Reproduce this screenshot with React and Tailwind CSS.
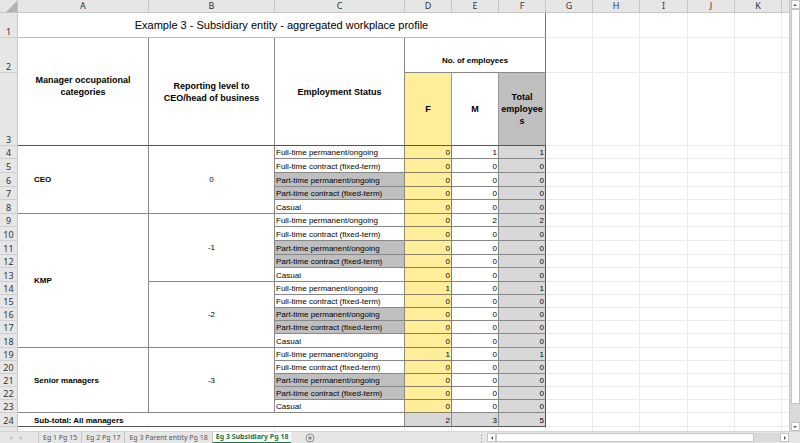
import { useState } from "react";

const columns = ["A", "B", "C", "D", "E", "F", "G", "H", "I", "J", "K", ""];

const full = "Full-time permanent/ongoing";
const fullFixed = "Full-time contract (fixed-term)";
const part = "Part-time permanent/ongoing";
const partFixed = "Part-time contract (fixed-term)";

const rows = [
  { n: 4, h: "h-[13px]", category: "CEO", catSpan: 5, level: "0", status: full, f: 0, m: 1, total: 1 },
  { n: 5, h: "h-[14px]", status: fullFixed, f: 0, m: 0, total: 0 },
  { n: 6, h: "h-[14px]", status: part, shaded: true, f: 0, m: 0, total: 0 },
  { n: 7, h: "h-[13px]", status: partFixed, shaded: true, f: 0, m: 0, total: 0 },
  { n: 8, h: "h-[14px]", status: "Casual", f: 0, m: 0, total: 0 },
  { n: 9, h: "h-[13px]", category: "KMP", catSpan: 10, level: "-1", status: full, f: 0, m: 2, total: 2 },
  { n: 10, h: "h-[14px]", status: fullFixed, f: 0, m: 0, total: 0 },
  { n: 11, h: "h-[14px]", status: part, shaded: true, f: 0, m: 0, total: 0 },
  { n: 12, h: "h-[13px]", status: partFixed, shaded: true, f: 0, m: 0, total: 0 },
  { n: 13, h: "h-[14px]", status: "Casual", f: 0, m: 0, total: 0 },
  { n: 14, h: "h-[13px]", level: "-2", status: full, f: 1, m: 0, total: 1 },
  { n: 15, h: "h-[13px]", status: fullFixed, f: 0, m: 0, total: 0 },
  { n: 16, h: "h-[13px]", status: part, shaded: true, f: 0, m: 0, total: 0 },
  { n: 17, h: "h-[13px]", status: partFixed, shaded: true, f: 0, m: 0, total: 0 },
  { n: 18, h: "h-[14px]", status: "Casual", f: 0, m: 0, total: 0 },
  { n: 19, h: "h-[13px]", category: "Senior managers", catSpan: 5, level: "-3", status: full, f: 1, m: 0, total: 1 },
  { n: 20, h: "h-[13px]", status: fullFixed, f: 0, m: 0, total: 0 },
  { n: 21, h: "h-[13px]", status: part, shaded: true, f: 0, m: 0, total: 0 },
  { n: 22, h: "h-[13px]", status: partFixed, shaded: true, f: 0, m: 0, total: 0 },
  { n: 23, h: "h-[13px]", status: "Casual", f: 0, m: 0, total: 0 },
];

const tabs = ["Eg 1 Pg 15", "Eg 2 Pg 17", "Eg 3 Parent entity Pg 18", "Eg 3 Subsidiary Pg 18"];

function RowHead({ n }) {
  return (
    <th
      scope="row"
      className="border-r border-b border-r-[#c6c6c6] border-b-[#cfcfcf] bg-[#e6e6e6] text-center align-bottom font-['Noto_Sans'] text-[9px] leading-[11px] font-normal text-[#333]"
    >
      {n}
    </th>
  );
}

// unused cells to the right of the data
function EmptyCells({ count = 6 }) {
  return Array.from({ length: count }, (_, i) => (
    <td key={i} className="border-r border-b border-[#ebebeb] last:border-r-0" />
  ));
}

function Arrow({ dir }) {
  const points = {
    up: "1,4 5,4 3,2",
    down: "1,2 5,2 3,4",
    left: "4,1 4,5 2,3",
    right: "2,1 2,5 4,3",
  };
  return (
    <svg viewBox="0 0 6 6" className="h-1.5 w-1.5" fill="currentColor">
      <polygon points={points[dir]} />
    </svg>
  );
}

function ScrollButton({ dir, label }) {
  return (
    <button
      aria-label={label}
      className="flex h-[9px] w-[9px] shrink-0 items-center justify-center border border-[#c4c4c4] bg-white text-[#555]"
    >
      <Arrow dir={dir} />
    </button>
  );
}

function Sheet() {
  return (
    <table className="w-full table-fixed border-separate border-spacing-0 text-[8px] leading-[11px] text-black">
      <colgroup>
        <col className="w-[18px]" />
        <col className="w-[131px]" />
        <col className="w-[126px]" />
        <col className="w-[130px]" />
        <col className="w-[47px]" />
        <col className="w-[47px]" />
        <col className="w-[47px]" />
        <col className="w-[47px]" />
        <col className="w-[47px]" />
        <col className="w-[48px]" />
        <col className="w-[47px]" />
        <col className="w-[47px]" />
        <col />
      </colgroup>
      <thead>
        <tr className="h-[13px] bg-[#e6e6e6]">
          <th className="border-r border-b border-[#c6c6c6]">
            <svg viewBox="0 0 11 11" className="ml-auto h-[11px] w-[11px]" fill="#b2b2b2">
              <polygon points="11,0 11,11 0,11" />
            </svg>
          </th>
          {columns.map((c, i) => (
            <th
              key={i}
              scope="col"
              className="border-r border-b border-[#c6c6c6] font-['Noto_Sans'] text-[9px] leading-3 font-normal text-[#333] last:border-r-0"
            >
              {c}
            </th>
          ))}
        </tr>
      </thead>
      <tbody className="[&_td]:p-0 [&_th]:p-0">
        <tr className="h-[25px]">
          <RowHead n={1} />
          <td
            colSpan={6}
            className="border-r border-b border-r-[#777] border-b-[#bbb] text-center text-[11px] leading-3"
          >
            Example 3 - Subsidiary entity - aggregated workplace profile
          </td>
          <EmptyCells />
        </tr>
        <tr className="h-[35px] text-[9px] leading-3">
          <RowHead n={2} />
          <th rowSpan={2} className="border-r border-b border-r-[#888] border-b-[#555]">
            <div className="px-3 pb-3">Manager occupational categories</div>
          </th>
          <th rowSpan={2} className="border-r border-b border-r-[#888] border-b-[#555]">
            <div className="px-3">Reporting level to CEO/head of business</div>
          </th>
          <th rowSpan={2} className="border-r border-b border-r-[#888] border-b-[#555]">
            Employment Status
          </th>
          <th colSpan={3} className="border-r border-b border-r-[#777] border-b-[#888] text-[8px]">
            <div className="pt-3">No. of employees</div>
          </th>
          <EmptyCells />
        </tr>
        <tr className="h-[73px] text-[9px] leading-3">
          <RowHead n={3} />
          <th className="border-r border-b border-r-[#999] border-b-[#555] bg-[#ffee99]">F</th>
          <th className="border-r border-b border-r-[#999] border-b-[#555]">M</th>
          <th className="border-r border-b border-r-[#777] border-b-[#555] bg-[#bfbfbf] break-words">
            Total employees
          </th>
          <EmptyCells />
        </tr>
        {rows.map((row) => (
          <tr key={row.n} className={row.h}>
            <RowHead n={row.n} />
            {row.category && (
              <th
                rowSpan={row.catSpan}
                className="border-r border-b border-[#888] text-left"
              >
                <div className="pl-4">{row.category}</div>
              </th>
            )}
            {row.level && (
              <td rowSpan={5} className="border-r border-b border-[#888] text-center">
                {row.level}
              </td>
            )}
            <td
              className={`border-r border-b border-[#888] align-bottom whitespace-nowrap ${
                row.shaded ? "bg-[#bfbfbf]" : ""
              }`}
            >
              <div className="pl-px">{row.status}</div>
            </td>
            <td className="border-r border-b border-[#888060] bg-[#ffee99] text-right align-bottom">
              <div className="pr-px">{row.f}</div>
            </td>
            <td className="border-r border-b border-[#888] text-right align-bottom">
              <div className="pr-px">{row.m}</div>
            </td>
            <td className="border-r border-b border-r-[#555] border-b-[#888] bg-[#d8d8d8] text-right align-bottom">
              <div className="pr-px">{row.total}</div>
            </td>
            <EmptyCells />
          </tr>
        ))}
        <tr className="h-[14px]">
          <RowHead n={24} />
          <th
            colSpan={3}
            className="border-r border-b border-r-[#888] border-b-[#555] text-left align-bottom"
          >
            <div className="pl-4">Sub-total: All managers</div>
          </th>
          <td className="border-r border-b border-r-[#888] border-b-[#555] bg-[#d8d8d8] text-right align-bottom">
            <div className="pr-px">2</div>
          </td>
          <td className="border-r border-b border-r-[#888] border-b-[#555] bg-[#d8d8d8] text-right align-bottom">
            <div className="pr-px">3</div>
          </td>
          <td className="border-r border-b border-[#555] bg-[#d8d8d8] text-right align-bottom">
            <div className="pr-px">5</div>
          </td>
          <EmptyCells />
        </tr>
        <tr className="h-[14px]">
          <RowHead n={25} />
          <EmptyCells count={12} />
        </tr>
      </tbody>
    </table>
  );
}

export default function App() {
  const [active, setActive] = useState(3);

  return (
    <div className="flex h-screen flex-col overflow-hidden bg-[#e6e6e6] font-['Liberation_Sans',sans-serif]">
      <div className="flex min-h-0 flex-1">
        <div className="min-w-0 flex-1 overflow-hidden bg-white">
          <Sheet />
        </div>
        <div className="flex w-[11px] flex-col items-center border-l border-[#c6c6c6] bg-[#dadada]">
          <ScrollButton dir="up" label="Scroll up" />
          <div className="w-[9px] flex-1 border border-[#c4c4c4] bg-white" />
          <div className="h-[18px]" />
          <ScrollButton dir="down" label="Scroll down" />
        </div>
      </div>

      <div className="flex h-3 shrink-0 items-stretch border-t border-[#d4d4d4] font-['Noto_Sans'] text-[7px] leading-[10px] text-[#555]">
        <div className="flex w-[38px] items-center gap-1 pl-2 text-[#b5b5b5]">
          <button aria-label="Previous sheet">
            <Arrow dir="left" />
          </button>
          <button aria-label="Next sheet">
            <Arrow dir="right" />
          </button>
        </div>
        {tabs.map((tab, i) => (
          <button
            key={tab}
            onClick={() => setActive(i)}
            className={
              i === active
                ? "border-b border-l border-b-[#217346] border-l-[#c6c6c6] bg-white px-[3px] font-bold whitespace-nowrap text-[#217346]"
                : "border-l border-[#c6c6c6] px-1 whitespace-nowrap"
            }
          >
            {tab}
          </button>
        ))}
        <button aria-label="New sheet" className="ml-3.5 flex items-center">
          <svg viewBox="0 0 10 10" className="h-2.5 w-2.5" fill="none" stroke="#777">
            <circle cx="5" cy="5" r="4" strokeWidth="0.8" />
            <path d="M5 3v4M3 5h4" />
          </svg>
        </button>
        <div className="ml-auto flex w-2/5 items-center pr-[11px]">
          <svg viewBox="0 0 3 8" className="mr-1 h-2 w-[3px]" fill="#888">
            <rect x="1" y="1" width="1" height="1" />
            <rect x="1" y="4" width="1" height="1" />
            <rect x="1" y="7" width="1" height="1" />
          </svg>
          <ScrollButton dir="left" label="Scroll left" />
          <div className="h-[9px] flex-1 border border-[#c4c4c4] bg-white" />
          <div className="h-[9px] w-[26px] bg-[#dadada]" />
          <ScrollButton dir="right" label="Scroll right" />
        </div>
      </div>
    </div>
  );
}
